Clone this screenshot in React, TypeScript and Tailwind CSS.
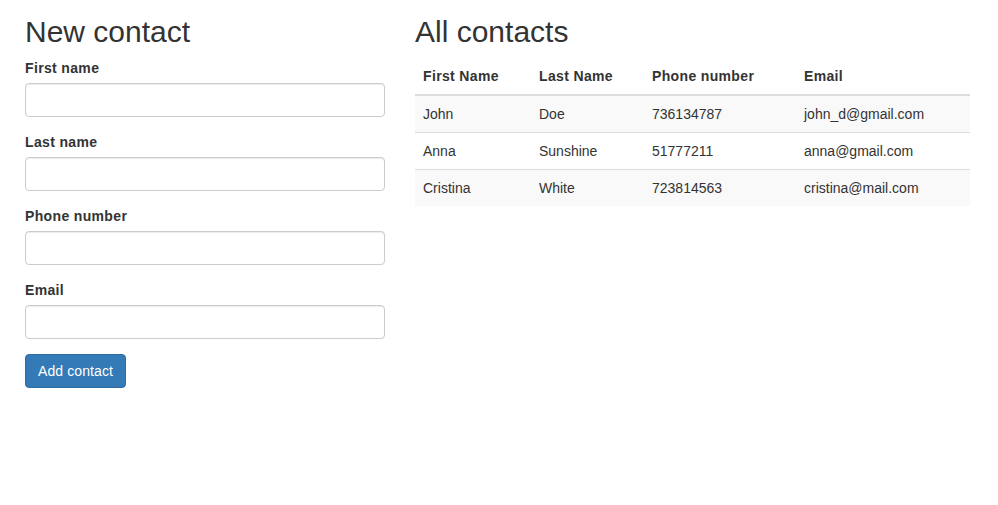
import { useState } from "react";

interface Contact {
  firstName: string;
  lastName: string;
  phone: string;
  email: string;
}

const initialContacts: Contact[] = [
  { firstName: "John", lastName: "Doe", phone: "736134787", email: "john_d@gmail.com" },
  { firstName: "Anna", lastName: "Sunshine", phone: "51777211", email: "anna@gmail.com" },
  { firstName: "Cristina", lastName: "White", phone: "723814563", email: "cristina@mail.com" },
];

const fields: { key: keyof Contact; label: string }[] = [
  { key: "firstName", label: "First name" },
  { key: "lastName", label: "Last name" },
  { key: "phone", label: "Phone number" },
  { key: "email", label: "Email" },
];

const emptyContact: Contact = { firstName: "", lastName: "", phone: "", email: "" };

export default function App() {
  const [contacts, setContacts] = useState<Contact[]>(initialContacts);
  const [draft, setDraft] = useState<Contact>(emptyContact);

  function handleSubmit(e: React.FormEvent) {
    e.preventDefault();
    setContacts([...contacts, draft]);
    setDraft(emptyContact);
  }

  return (
    <div className="min-h-[505px] bg-white px-[25px] pt-[15px] font-['Liberation_Sans',Arial,sans-serif] text-[14px] leading-[20px] text-[#333]">
      <div className="flex gap-[30px]">
        <div className="w-[360px] shrink-0">
          <h2 className="mb-[10px] text-[30px] leading-[33px] font-normal">New contact</h2>
          <form onSubmit={handleSubmit}>
            {fields.map((f) => (
              <div key={f.key} className="mb-[15px]">
                <label className="mb-[5px] block font-bold tracking-[0.35px]">{f.label}</label>
                <input
                  type="text"
                  value={draft[f.key]}
                  onChange={(e) => setDraft({ ...draft, [f.key]: e.target.value })}
                  className="block h-[34px] w-full rounded-[4px] border border-[#ccc] bg-white px-3 py-[6px] text-[14px] text-[#555] shadow-[inset_0_1px_1px_rgba(0,0,0,0.075)] outline-none focus:border-[#66afe9]"
                />
              </div>
            ))}
            <button
              type="submit"
              className="h-[34px] rounded-[4px] border border-[#2e6da4] bg-[#337ab7] px-3 py-[6px] text-[14px] leading-[20px] tracking-[0.1px] text-white"
            >
              Add contact
            </button>
          </form>
        </div>

        <div className="w-[555px] shrink-0">
          <h2 className="mb-[10px] text-[30px] leading-[33px] font-normal">All contacts</h2>
          <table className="w-full border-collapse text-left">
            <thead>
              <tr className="tracking-[0.35px]">
                <th className="w-[116px] border-b-2 border-[#ddd] p-2 font-bold">First Name</th>
                <th className="w-[113px] border-b-2 border-[#ddd] p-2 font-bold">Last Name</th>
                <th className="w-[152px] border-b-2 border-[#ddd] p-2 font-bold">Phone number</th>
                <th className="border-b-2 border-[#ddd] p-2 font-bold">Email</th>
              </tr>
            </thead>
            <tbody>
              {contacts.map((c, i) => (
                <tr key={i} className={i % 2 === 0 ? "bg-[#f9f9f9]" : "bg-white"}>
                  <td className={`${i > 0 ? "border-t border-[#ddd]" : ""} p-2`}>{c.firstName}</td>
                  <td className={`${i > 0 ? "border-t border-[#ddd]" : ""} p-2`}>{c.lastName}</td>
                  <td className={`${i > 0 ? "border-t border-[#ddd]" : ""} p-2`}>{c.phone}</td>
                  <td className={`${i > 0 ? "border-t border-[#ddd]" : ""} p-2`}>{c.email}</td>
                </tr>
              ))}
            </tbody>
          </table>
        </div>
      </div>
    </div>
  );
}
